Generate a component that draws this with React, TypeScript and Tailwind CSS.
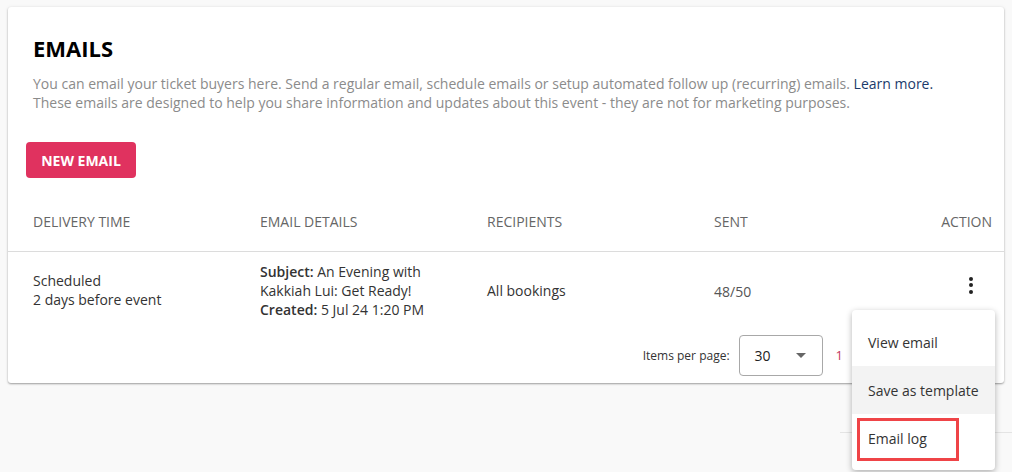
const COLS = ["DELIVERY TIME", "EMAIL DETAILS", "RECIPIENTS", "SENT"];

function Kebab() {
  return (
    <div className="flex flex-col items-center gap-[2.5px]">
      <span className="block size-[4px] rounded-full bg-[#222]" />
      <span className="block size-[4px] rounded-full bg-[#222]" />
      <span className="block size-[4px] rounded-full bg-[#222]" />
    </div>
  );
}

export default function App() {
  return (
    <div
      className="relative h-[472px] w-[1012px] overflow-hidden bg-[#f9f9f9] pt-[7px]"
      style={{ fontFamily: '"Open Sans", "Liberation Sans", sans-serif' }}
    >
      <div className="mx-2 w-[996px] rounded-[3px] bg-white shadow-[0_1px_2px_rgba(0,0,0,0.35),0_0_4px_rgba(0,0,0,0.06)]">
        <div className="px-[25px] pt-[26px]">
          <h1 className="text-[22px] font-bold leading-[30px] text-black">EMAILS</h1>
          <p className="mt-[11px] text-[14px] leading-[19px] text-[#8b8b8b]">
            You can email your ticket buyers here. Send a regular email, schedule emails or setup
            automated follow up (recurring) emails.{" "}
            <a className="text-[#1b3a6b]">Learn more.</a>
            <br />
            These emails are designed to help you share information and updates about this event -
            they are not for marketing purposes.
          </p>
        </div>

        <div className="pl-[18px] pt-[30px]">
          <button className="h-[36px] w-[110px] rounded-[4px] bg-[#e0325f] text-[14px] font-bold text-white">
            NEW EMAIL
          </button>
        </div>

        <div className="mt-[14px] grid h-[60px] grid-cols-[227px_227px_227px_227px_1fr] items-center border-b border-[#dcdcdc] pl-[25px] pr-[12px] text-[14px] text-[#666]">
          {COLS.map((c) => (
            <div key={c}>{c}</div>
          ))}
          <div className="text-right">ACTION</div>
        </div>

        <div className="grid h-[76px] grid-cols-[227px_227px_227px_227px_1fr] items-center pl-[25px] pr-[12px] text-[14px] leading-[19px] text-[#333]">
          <div>
            Scheduled
            <br />2 days before event
          </div>
          <div>
            <b className="font-semibold">Subject:</b> An Evening with
            <br />
            Kakkiah Lui: Get Ready!
            <br />
            <b className="font-semibold">Created:</b> 5 Jul 24 1:20 PM
          </div>
          <div>All bookings</div>
          <div className="pt-[3px] text-[#555]">48/50</div>
          <div className="flex justify-end pr-[19px] pb-[10px]">
            <Kebab />
          </div>
        </div>

        <div className="flex h-[55px] items-center justify-end pr-[161px]">
          <span className="mr-[9px] text-[12px] text-[#333]">Items per page:</span>
          <div className="flex h-[41px] w-[84px] items-center justify-between rounded-[4px] border border-[#a8a8a8] pl-[15px] pr-[16px] text-[14px] text-[#222]">
            <span>30</span>
            <span className="h-0 w-0 border-x-[5px] border-t-[5px] border-x-transparent border-t-[#666]" />
          </div>
          <span className="ml-[13px] text-[13px] text-[#c2365f]">1</span>
        </div>
      </div>

      <div className="absolute left-[840px] top-[432px] h-px w-[172px] bg-[#e4e4e4]" />
      <div className="absolute left-[967px] top-[466px]">
        <Kebab />
      </div>

      <div className="absolute left-[852px] top-[310px] w-[143px] rounded-[4px] bg-white py-[8px] text-[14px] text-[#333] shadow-[0_2px_6px_rgba(0,0,0,0.3)]">
        <div className="flex h-[48px] items-center px-[16px]">View email</div>
        <div className="flex h-[48px] items-center bg-[#f3f3f3] px-[16px]">Save as template</div>
        <div className="flex h-[48px] items-center px-[16px]">Email log</div>
      </div>
      <div className="absolute left-[857px] top-[418px] h-[43px] w-[102px] border-[3px] border-[#ef4447]" />
    </div>
  );
}
